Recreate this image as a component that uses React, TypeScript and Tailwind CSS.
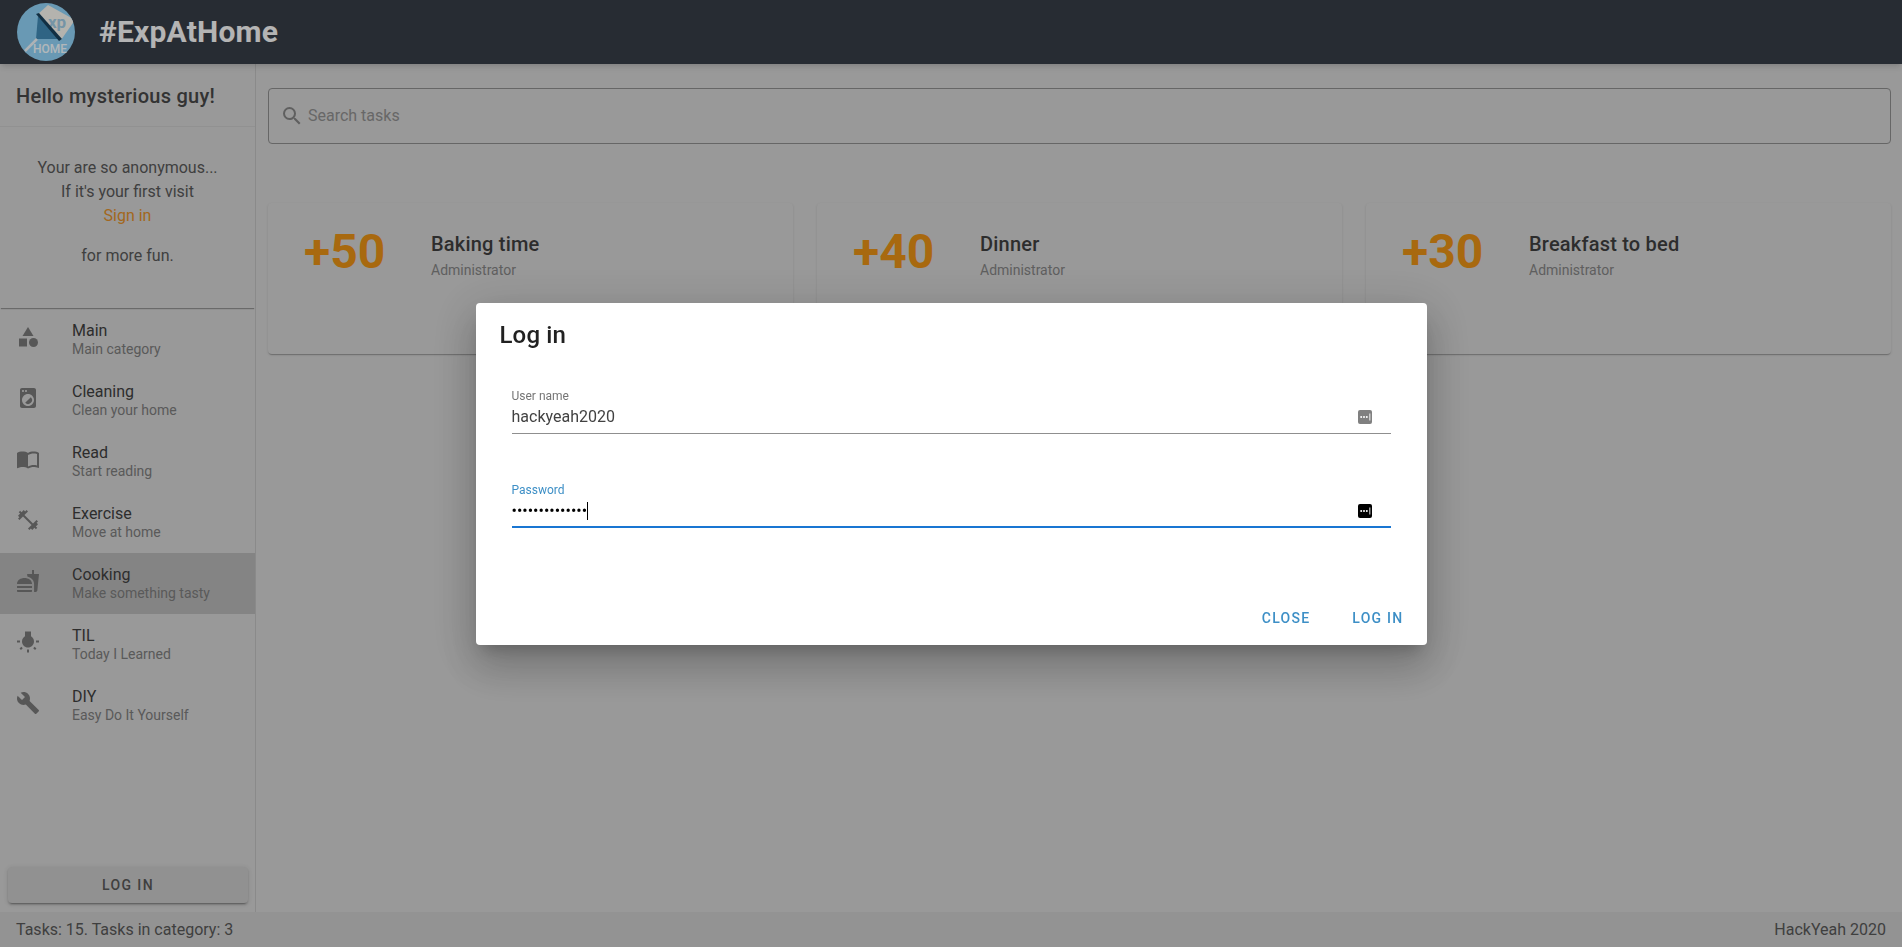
import { MdBuild, MdCategory, MdFastfood, MdFitnessCenter, MdImportContacts, MdLocalLaundryService, MdSearch, MdWbIncandescent } from "react-icons/md";
import type { IconType } from "react-icons";

const categories: { name: string; sub: string; icon: IconType; active?: boolean }[] = [
  { name: "Main", sub: "Main category", icon: MdCategory },
  { name: "Cleaning", sub: "Clean your home", icon: MdLocalLaundryService },
  { name: "Read", sub: "Start reading", icon: MdImportContacts },
  { name: "Exercise", sub: "Move at home", icon: MdFitnessCenter },
  { name: "Cooking", sub: "Make something tasty", icon: MdFastfood, active: true },
  { name: "TIL", sub: "Today I Learned", icon: MdWbIncandescent },
  { name: "DIY", sub: "Easy Do It Yourself", icon: MdBuild },
];

const tasks = [
  { points: "+50", title: "Baking time" },
  { points: "+40", title: "Dinner" },
  { points: "+30", title: "Breakfast to bed" },
];

function Logo() {
  return (
    <svg viewBox="0 0 58 58" className="w-[58px] h-[58px] shrink-0">
      <defs>
        <clipPath id="logo-clip">
          <circle cx="29" cy="29" r="29" />
        </clipPath>
      </defs>
      <g clipPath="url(#logo-clip)">
        <rect width="58" height="58" fill="#8ccdf0" />
        <path d="M20 12 L31 2 L58 17 L44 37 Z" fill="#f0efe8" />
        <text x="40" y="25" fontSize="17" fill="#9cc6de" fontFamily="Roboto" fontWeight="700" textAnchor="middle">xp</text>
        <path d="M21 13 L42 36 L19 36 Z" fill="#3f86b0" />
        <path d="M19 11 L22 10 L45 36 L42 38 Z" fill="#173f5a" />
        <path d="M20 36 L8 48" stroke="#e8eef2" strokeWidth="2.5" />
        <text x="33" y="50" fontSize="12" fill="#eef5f9" fontFamily="Roboto" fontWeight="500" textAnchor="middle">HOME</text>
      </g>
    </svg>
  );
}

function KeyBadge({ dim }: { dim?: boolean }) {
  return (
    <svg viewBox="0 0 14 14" className="w-[14px] h-[14px] shrink-0">
      <rect width="14" height="14" rx="2" fill={dim ? "#808080" : "#000000"} />
      <circle cx="3.2" cy="7" r="1" fill="#fff" />
      <circle cx="6" cy="7" r="1" fill="#fff" />
      <circle cx="8.8" cy="7" r="1" fill="#fff" />
      <rect x="11.4" y="3.5" width="0.9" height="7" fill="#fff" />
    </svg>
  );
}

export default function App() {
  return (
    <div className="h-[947px] flex flex-col overflow-hidden bg-[#cccccc] font-['Roboto',sans-serif] text-[#3d3d3d]">
      {/* Header */}
      <header className="h-16 shrink-0 bg-[#353b44] flex items-center pl-[17px] shadow-md z-10">
        <Logo />
        <h1 className="ml-6 -mt-px text-[30px] font-bold tracking-[0.2px] text-[#f0f0f0]">#ExpAtHome</h1>
      </header>

      <div className="flex flex-1 min-h-0">
        {/* Sidebar */}
        <aside className="w-[256px] shrink-0 border-r border-[#b8b8b8] flex flex-col">
          <div className="h-[63px] border-b border-[#c2c2c2] pl-4 flex items-center">
            <h2 className="mt-[2px] text-xl font-medium tracking-[0.25px] text-[#444444]">Hello mysterious guy!</h2>
          </div>
          <div className="h-[181px] pt-[29px] text-center text-base leading-6 text-[#555555] shadow-[0_2px_1px_-1px_rgba(0,0,0,0.3)]">
            <p>Your are so anonymous...</p>
            <p>If it's your first visit</p>
            <p className="text-[#d98a28]">Sign in</p>
            <p className="mt-4">for more fun.</p>
          </div>
          <nav className="mt-px flex flex-col">
            {categories.map((c) => (
              <div key={c.name} className={`h-[61px] flex items-center pl-[16px] ${c.active ? "bg-[#b1b1b1]" : ""}`}>
                <c.icon className="w-6 h-6 mb-[6px] text-[#757575] shrink-0" />
                <div className="ml-8 flex flex-col -mt-[3px]">
                  <span className="text-base leading-[22px]">{c.name}</span>
                  <span className="text-sm leading-[15px] text-[#787878]">{c.sub}</span>
                </div>
              </div>
            ))}
          </nav>
          <div className="mt-auto pl-2 pr-[7px] pb-[9px]">
            <button className="w-full h-9 rounded bg-[#c2c2c2] text-sm font-medium tracking-[1.4px] text-[#555555] shadow-[0_3px_1px_-2px_rgba(0,0,0,0.2),0_2px_2px_0_rgba(0,0,0,0.14),0_1px_5px_0_rgba(0,0,0,0.12)]">
              LOG IN
            </button>
          </div>
        </aside>

        {/* Main */}
        <main className="flex-1 pl-3 pr-[11px] pt-6">
          <div className="h-14 border border-[#888888] rounded flex items-center pl-[11px]">
            <MdSearch className="w-6 h-6 text-[#7f7f7f]" />
            <span className="ml-[4px] text-base text-[#8a8a8a]">Search tasks</span>
          </div>
          <div className="mt-[59px] grid grid-cols-3 gap-6">
            {tasks.map((t) => (
              <div key={t.title} className="h-[151px] rounded bg-[#cccccc] shadow-[0_2px_1px_-1px_rgba(0,0,0,0.16),0_1px_1px_0_rgba(0,0,0,0.1),0_1px_3px_0_rgba(0,0,0,0.08)] flex items-start pl-[36px]">
                <div className="w-[127px] mt-[19px] text-5xl leading-[60px] font-bold text-[#e08d15]">{t.points}</div>
                <div className="mt-[28px] flex flex-col">
                  <span className="text-xl leading-[26px] font-medium tracking-[0.2px]">{t.title}</span>
                  <span className="text-sm leading-[26px] text-[#7f7f7f]">Administrator</span>
                </div>
              </div>
            ))}
          </div>
        </main>
      </div>

      {/* Footer */}
      <footer className="h-[35px] shrink-0 bg-[#c4c4c4] flex items-center justify-between px-4 text-base text-[#555555]">
        <span>Tasks: 15. Tasks in category: 3</span>
        <span>HackYeah 2020</span>
      </footer>

      {/* Dialog */}
      <div className="fixed inset-0 z-20 bg-black/25 flex items-center justify-center">
        <div className="w-[951px] h-[342px] rounded bg-white flex flex-col text-[#212121] shadow-[0_11px_15px_-7px_rgba(0,0,0,0.2),0_24px_38px_3px_rgba(0,0,0,0.14),0_9px_46px_8px_rgba(0,0,0,0.12)]">
          <h2 className="mt-4 ml-6 text-2xl leading-8 font-medium tracking-[0.15px]">Log in</h2>
          <div className="mt-[38px] ml-9 mr-9 flex flex-col">
            <div className="h-[45px] border-b border-[#8f8f8f] flex flex-col">
              <span className="text-xs leading-[14px] text-[#757575]">User name</span>
              <div className="flex items-center justify-between pr-[19px] mt-[2px]">
                <span className="text-base leading-[24px] text-[#424242]">hackyeah2020</span>
                <KeyBadge dim />
              </div>
            </div>
            <div className="mt-[49px] h-[45px] border-b-2 border-[#1976d2] flex flex-col">
              <span className="text-xs leading-[14px] text-[#3d8fc6]">Password</span>
              <div className="flex items-center justify-between pr-[19px] mt-[2px]">
                <span className="flex items-center">
                  <span className="text-base leading-[24px] text-black">••••••••••••••</span>
                  <span className="w-px h-[18px] bg-black" />
                </span>
                <KeyBadge />
              </div>
            </div>
          </div>
          <div className="mt-auto mb-[9px] flex justify-end gap-[42px] pr-[23px]">
            <button className="h-9 text-sm font-medium tracking-[1.25px] text-[#3d8fc6]">CLOSE</button>
            <button className="h-9 text-sm font-medium tracking-[1.25px] text-[#3d8fc6]">LOG IN</button>
          </div>
        </div>
      </div>
    </div>
  );
}
